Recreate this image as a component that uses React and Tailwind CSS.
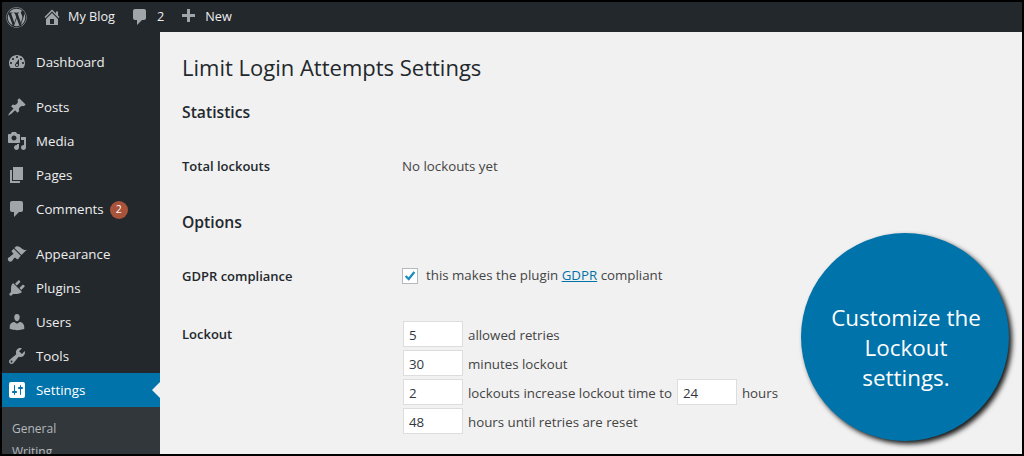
import React from "react";
import { FaWordpress } from "react-icons/fa";

const paths = {
  home: "M16 8.5l1.53 1.53-1.06 1.06L10 4.62l-6.47 6.47-1.06-1.06L10 2.5l4 4v-2h2v4zm-6-2.46l6 5.99V18H4v-5.97zM12 17v-5H8v5h4z",
  comment: "M5 2h9c1.1 0 2 .9 2 2v7c0 1.1-.9 2-2 2h-2l-5 5v-5H5c-1.1 0-2-.9-2-2V4c0-1.1.9-2 2-2z",
  plus: "M17 7v3h-5v5H9v-5H4V7h5V2h3v5h5z",
  dashboard: "M3.76 16h12.48c1.1-1.37 1.76-3.11 1.76-5 0-4.42-3.58-8-8-8s-8 3.58-8 8c0 1.89.66 3.63 1.76 5zM10 4c.55 0 1 .45 1 1s-.45 1-1 1-1-.45-1-1 .45-1 1-1zM6 6c.55 0 1 .45 1 1s-.45 1-1 1-1-.45-1-1 .45-1 1-1zm8 0c.55 0 1 .45 1 1s-.45 1-1 1-1-.45-1-1 .45-1 1-1zm-5.37 5.55L12 7v6c0 1.1-.9 2-2 2s-2-.9-2-2c0-.57.24-1.08.63-1.45zM4 10c.55 0 1 .45 1 1s-.45 1-1 1-1-.45-1-1 .45-1 1-1zm12 0c.55 0 1 .45 1 1s-.45 1-1 1-1-.45-1-1 .45-1 1-1zm-5 3c0-.55-.45-1-1-1s-1 .45-1 1 .45 1 1 1 1-.45 1-1z",
  pin: "M10.44 3.02l1.82-1.82 6.36 6.35-1.83 1.82c-1.05-.68-2.48-.57-3.41.36l-.75.75c-.92.93-1.04 2.35-.35 3.41l-1.83 1.82-2.41-2.41-2.8 2.79c-.42.42-3.38 2.71-3.8 2.29s1.86-3.39 2.28-3.81l2.79-2.79L4.1 9.36l1.83-1.82c1.05.69 2.48.57 3.4-.36l.75-.75c.93-.92 1.05-2.35.36-3.41z",
  media: "M13 11V4c0-.55-.45-1-1-1h-1.67L9 1H5L3.67 3H2c-.55 0-1 .45-1 1v7c0 .55.45 1 1 1h10c.55 0 1-.45 1-1zM7 4.5c1.38 0 2.5 1.12 2.5 2.5S8.38 9.5 7 9.5 4.5 8.38 4.5 7 5.62 4.5 7 4.5zM14 6h5v10.5c0 1.38-1.12 2.5-2.5 2.5S14 17.88 14 16.5s1.12-2.5 2.5-2.5c.17 0 .34.02.5.05V9h-3V6zm-4 8.05V13h2v3.5c0 1.38-1.12 2.5-2.5 2.5S7 17.88 7 16.5 8.12 14 9.5 14c.17 0 .34.02.5.05z",
  page: "M6 15V2h10v13H6zm-1 1h8v2H3V5h2v11z",
  appearance: "M14.48 11.06L7.41 3.99l1.5-1.5c.5-.56 2.3-.47 3.51.32 1.21.8 1.43 1.28 2.91 2.1 1.18.64 2.45 1.26 4.45.85zm-.71.71L6.7 4.7 4.93 6.47c-.39.39-.39 1.02 0 1.41l1.06 1.06c.39.39.39 1.03 0 1.42-.6.6-1.43 1.11-2.21 1.69-.35.26-.7.53-1.01.84C1.43 13.23.4 14.08 1.02 15.9c.56 1.7 2.25 2.2 3.74 1.27.31-.31.58-.66.84-1.01.58-.78 1.09-1.61 1.69-2.21.39-.39 1.02-.39 1.41 0l1.06 1.06c.39.39 1.02.39 1.41 0z",
  plugin: "M13.11 4.36L9.87 7.6 8 5.73l3.24-3.24c.35-.34 1.05-.2 1.56.32.52.51.66 1.21.31 1.55zm-8 1.77l.91-1.12 9.01 9.01-1.19.84c-.71.71-2.63 1.16-3.82 1.16H6.14L4.9 17.26c-.59.59-1.54.59-2.12 0-.59-.58-.59-1.53 0-2.12l1.24-1.24v-3.88c0-1.13.4-3.19 1.09-3.89zm7.26 3.97l3.24-3.24c.34-.35 1.04-.21 1.55.31.52.51.66 1.21.31 1.55l-3.24 3.25z",
  users: "M10 9.25c-2.27 0-2.73-3.44-2.73-3.44C7 4.02 7.82 2 9.97 2c2.16 0 2.98 2.02 2.71 3.81 0 0-.41 3.44-2.68 3.44zm0 2.57L12.72 10c2.39 0 4.52 2.33 4.52 4.53v2.49s-3.65 1.13-7.24 1.13c-3.65 0-7.24-1.13-7.24-1.13v-2.49c0-2.25 1.94-4.48 4.47-4.48z",
  tools: "M16.68 9.77c-1.34 1.34-3.3 1.67-4.95.99l-5.41 6.52c-.99.99-2.59.99-3.58 0s-.99-2.59 0-3.57l6.52-5.42c-.68-1.65-.35-3.61.99-4.95 1.28-1.28 3.12-1.62 4.72-1.06l-2.89 2.89 2.82 2.82 2.86-2.87c.53 1.58.18 3.39-1.08 4.65zM3.81 16.21c.4.39 1.04.39 1.43 0 .4-.4.4-1.04 0-1.43-.39-.4-1.03-.4-1.43 0-.39.39-.39 1.03 0 1.43z",
  settings: "M18 16V4c0-1.1-.9-2-2-2H4c-1.1 0-2 .9-2 2v12c0 1.1.9 2 2 2h12c1.1 0 2-.9 2-2zM8 11h1c.55 0 1 .45 1 1s-.45 1-1 1H8v1.5c0 .28-.22.5-.5.5s-.5-.22-.5-.5V13H6c-.55 0-1-.45-1-1s.45-1 1-1h1V5.5c0-.28.22-.5.5-.5s.5.22.5.5V11zm5-2h-1c-.55 0-1-.45-1-1s.45-1 1-1h1V5.5c0-.28.22-.5.5-.5s.5.22.5.5V7h1c.55 0 1 .45 1 1s-.45 1-1 1h-1v5.5c0 .28-.22.5-.5.5s-.5-.22-.5-.5V9z",
};

function Dashicon({ d, className }) {
  return (
    <svg viewBox="0 0 20 20" className={`w-[20px] h-[20px] shrink-0 ${className}`} fill="currentColor">
      <path d={d} />
    </svg>
  );
}

function MenuItem({ icon, label, children }) {
  return (
    <div className="h-[34px] flex items-center text-[#eeeeee] text-[13.3px]">
      <Dashicon d={icon} className="ml-[5px] mr-[9px] text-[#a0a5aa]" />
      <span className="pt-[2px]">{label}</span>
      {children}
    </div>
  );
}

function NumberBox({ value }) {
  return (
    <div className="w-[60px] h-[26px] bg-white border border-[#dddddd] pl-[5px] pt-[3px] flex items-center text-[#32373c] text-[13.3px]">
      {value}
    </div>
  );
}

function Row({ children }) {
  return <div className="flex items-center gap-[5px]">{children}</div>;
}

export default function App() {
  return (
    <div className="w-[1024px] h-[456px] bg-black p-[2px] overflow-hidden font-['Open_Sans','Noto_Sans',sans-serif]">
      <div className="relative w-[1020px] h-[452px] flex flex-col overflow-hidden">
        <header className="h-[30px] shrink-0 bg-[#23282d] flex items-center text-[#eeeeee] text-[12.7px]">
          <FaWordpress className="ml-[4px] w-[21px] h-[21px] text-[#a0a5aa]" />
          <Dashicon d={paths.home} className="ml-[15px] text-[#a0a5aa]" />
          <span className="ml-[6px]">My Blog</span>
          <Dashicon d={paths.comment} className="ml-[15px] text-[#a0a5aa]" />
          <span className="ml-[7px]">2</span>
          <Dashicon d={paths.plus} className="ml-[14px] text-[#a0a5aa]" />
          <span className="ml-[7px]">New</span>
        </header>
        <div className="flex flex-1 min-h-0">
          <aside className="w-[158px] shrink-0 bg-[#23282d] pt-[13px] overflow-hidden">
            <MenuItem icon={paths.dashboard} label="Dashboard" />
            <div className="h-[11px]" />
            <MenuItem icon={paths.pin} label="Posts" />
            <MenuItem icon={paths.media} label="Media" />
            <MenuItem icon={paths.page} label="Pages" />
            <MenuItem icon={paths.comment} label="Comments">
              <span className="ml-[6px] mt-[2px] w-[18px] h-[18px] rounded-full bg-[#a8533a] text-white text-[10.5px] flex items-center justify-center">2</span>
            </MenuItem>
            <div className="h-[11px]" />
            <MenuItem icon={paths.appearance} label="Appearance" />
            <MenuItem icon={paths.plugin} label="Plugins" />
            <MenuItem icon={paths.users} label="Users" />
            <MenuItem icon={paths.tools} label="Tools" />
            <div className="relative h-[34px] bg-[#0073aa] flex items-center text-white text-[13.3px]">
              <Dashicon d={paths.settings} className="ml-[5px] mr-[9px] text-white" />
              <span className="pt-[2px]">Settings</span>
              <div className="absolute right-0 top-[9px] border-y-[8px] border-y-transparent border-r-[8px] border-r-[#f1f1f1]" />
            </div>
            <div className="bg-[#32373c] pt-[10px] pb-[8px] pl-[10px] text-[#b4b9be] text-[12px] leading-[23px]">
              <div>General</div>
              <div>Writing</div>
            </div>
          </aside>
          <main className="flex-1 bg-[#f1f1f1] pl-[22px] pt-[20px] text-[#444444] text-[13.3px]">
            <h1 className="text-[22px] leading-[30px] text-[#23282d]">Limit Login Attempts Settings</h1>
            <h2 className="mt-[18px] text-[15.7px] leading-[24px] font-semibold text-[#23282d]">Statistics</h2>
            <div className="mt-[32px] flex leading-[20px]">
              <div className="w-[220px] font-semibold text-[#23282d] text-[13px]">Total lockouts</div>
              <div>No lockouts yet</div>
            </div>
            <h2 className="mt-[34px] text-[15.7px] leading-[24px] font-semibold text-[#23282d]">Options</h2>
            <div className="mt-[32px] flex leading-[20px]">
              <div className="w-[220px] font-semibold text-[#23282d] text-[13px]">GDPR compliance</div>
              <div className="flex items-center">
                <div className="w-[16px] h-[16px] bg-white border border-[#b4b9be] flex items-center justify-center">
                  <svg viewBox="0 0 16 16" className="w-[14px] h-[14px]">
                    <path d="M3 8l3.5 3.5L13 3.5" stroke="#1e8cbe" strokeWidth="2.6" fill="none" />
                  </svg>
                </div>
                <span className="ml-[8px] -mt-[2px]">
                  this makes the plugin <span className="text-[#0073aa] underline">GDPR</span> compliant
                </span>
              </div>
            </div>
            <div className="mt-[35px] flex">
              <div className="w-[221px] font-semibold text-[#23282d] text-[13px] leading-[20px] pt-[3px]">Lockout</div>
              <div className="flex flex-col gap-[3px]">
                <Row><NumberBox value="5" /><span className="pt-[4px]">allowed retries</span></Row>
                <Row><NumberBox value="30" /><span className="pt-[4px]">minutes lockout</span></Row>
                <Row>
                  <NumberBox value="2" /><span className="pt-[4px]">lockouts increase lockout time to</span><NumberBox value="24" /><span className="pt-[4px]">hours</span>
                </Row>
                <Row><NumberBox value="48" /><span className="pt-[4px]">hours until retries are reset</span></Row>
              </div>
            </div>
          </main>
        </div>
        <div className="absolute left-[799px] top-[231px] w-[208px] h-[208px] rounded-full bg-[#0073aa] shadow-[3px_3px_5px_rgba(0,0,0,0.9)] pt-[22px] pl-[2px] flex items-center justify-center text-center text-white text-[22.4px] leading-[30px]">
          <div>Customize the<br />Lockout<br />settings.</div>
        </div>
      </div>
    </div>
  );
}
